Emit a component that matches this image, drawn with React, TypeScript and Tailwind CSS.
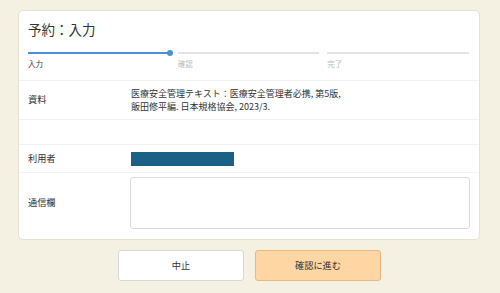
export default function App() {
  const font = { fontFamily: '"Noto Sans CJK JP", "Noto Sans", sans-serif' };
  return (
    <div
      className="w-[500px] h-[293px] bg-[#f4f1e3] pt-[10px] pl-[18px] text-[#333]"
      style={font}
    >
      <div className="w-[462px] rounded-[5px] border border-[#e6e2d2] bg-white">
        <div className="px-[9px] pt-[9px]">
          <h1 className="text-[13.5px] leading-[19px] text-[#333]">予約：入力</h1>
          <div className="mt-[13px] grid grid-cols-3 gap-x-[8px] pr-[1px]">
            <div>
              <div className="relative h-[2px] bg-[#4a8fd8]">
                <span className="absolute right-[-3px] top-[-2px] h-[6px] w-[6px] rounded-full bg-[#4a8fd8]" />
              </div>
              <div className="mt-[5px] text-[7.5px] leading-[10px] text-[#444]">入力</div>
            </div>
            <div>
              <div className="h-[2px] bg-[#e4e4e4]" />
              <div className="mt-[5px] text-[7.5px] leading-[10px] text-[#bbb]">確認</div>
            </div>
            <div>
              <div className="h-[2px] bg-[#e4e4e4]" />
              <div className="mt-[5px] text-[7.5px] leading-[10px] text-[#bbb]">完了</div>
            </div>
          </div>
        </div>

        <div className="mt-[11px] border-t border-[#f2f2f2]">
          <div className="flex h-[39px] items-center border-b border-[#f2f2f2] px-[9px] text-[9.2px]">
            <div className="w-[103px]">資料</div>
            <div className="text-[9px] leading-[13.5px]">
              <div>医療安全管理テキスト：医療安全管理者必携, 第5版,</div>
              <div>飯田修平編. 日本規格協会, 2023/3.</div>
            </div>
          </div>
          <div className="h-[25px] border-b border-[#f2f2f2]" />
          <div className="flex h-[28px] items-center border-b border-[#f2f2f2] px-[9px] text-[9.2px]">
            <div className="w-[103px]">利用者</div>
            <div className="h-[14px] w-[103px] bg-[#1b6185]" />
          </div>
          <div className="flex items-center px-[9px] pb-[10px] pt-[4px] text-[9.2px]">
            <div className="w-[102px]">通信欄</div>
            <textarea className="h-[52px] w-[340px] resize-none rounded-[3px] border border-[#dcdcdc] bg-white" />
          </div>
        </div>
      </div>

      <div className="mt-[10px] flex w-[462px] justify-center gap-[11px] pl-[1px] text-[9.2px]">
        <button className="h-[31px] w-[126px] rounded-[3px] border border-[#d8d8d8] bg-white text-[#333]">
          中止
        </button>
        <button className="h-[31px] w-[126px] rounded-[3px] border border-[#e9b77f] bg-[#fdd6a3] text-[#333]">
          確認に進む
        </button>
      </div>
    </div>
  );
}
